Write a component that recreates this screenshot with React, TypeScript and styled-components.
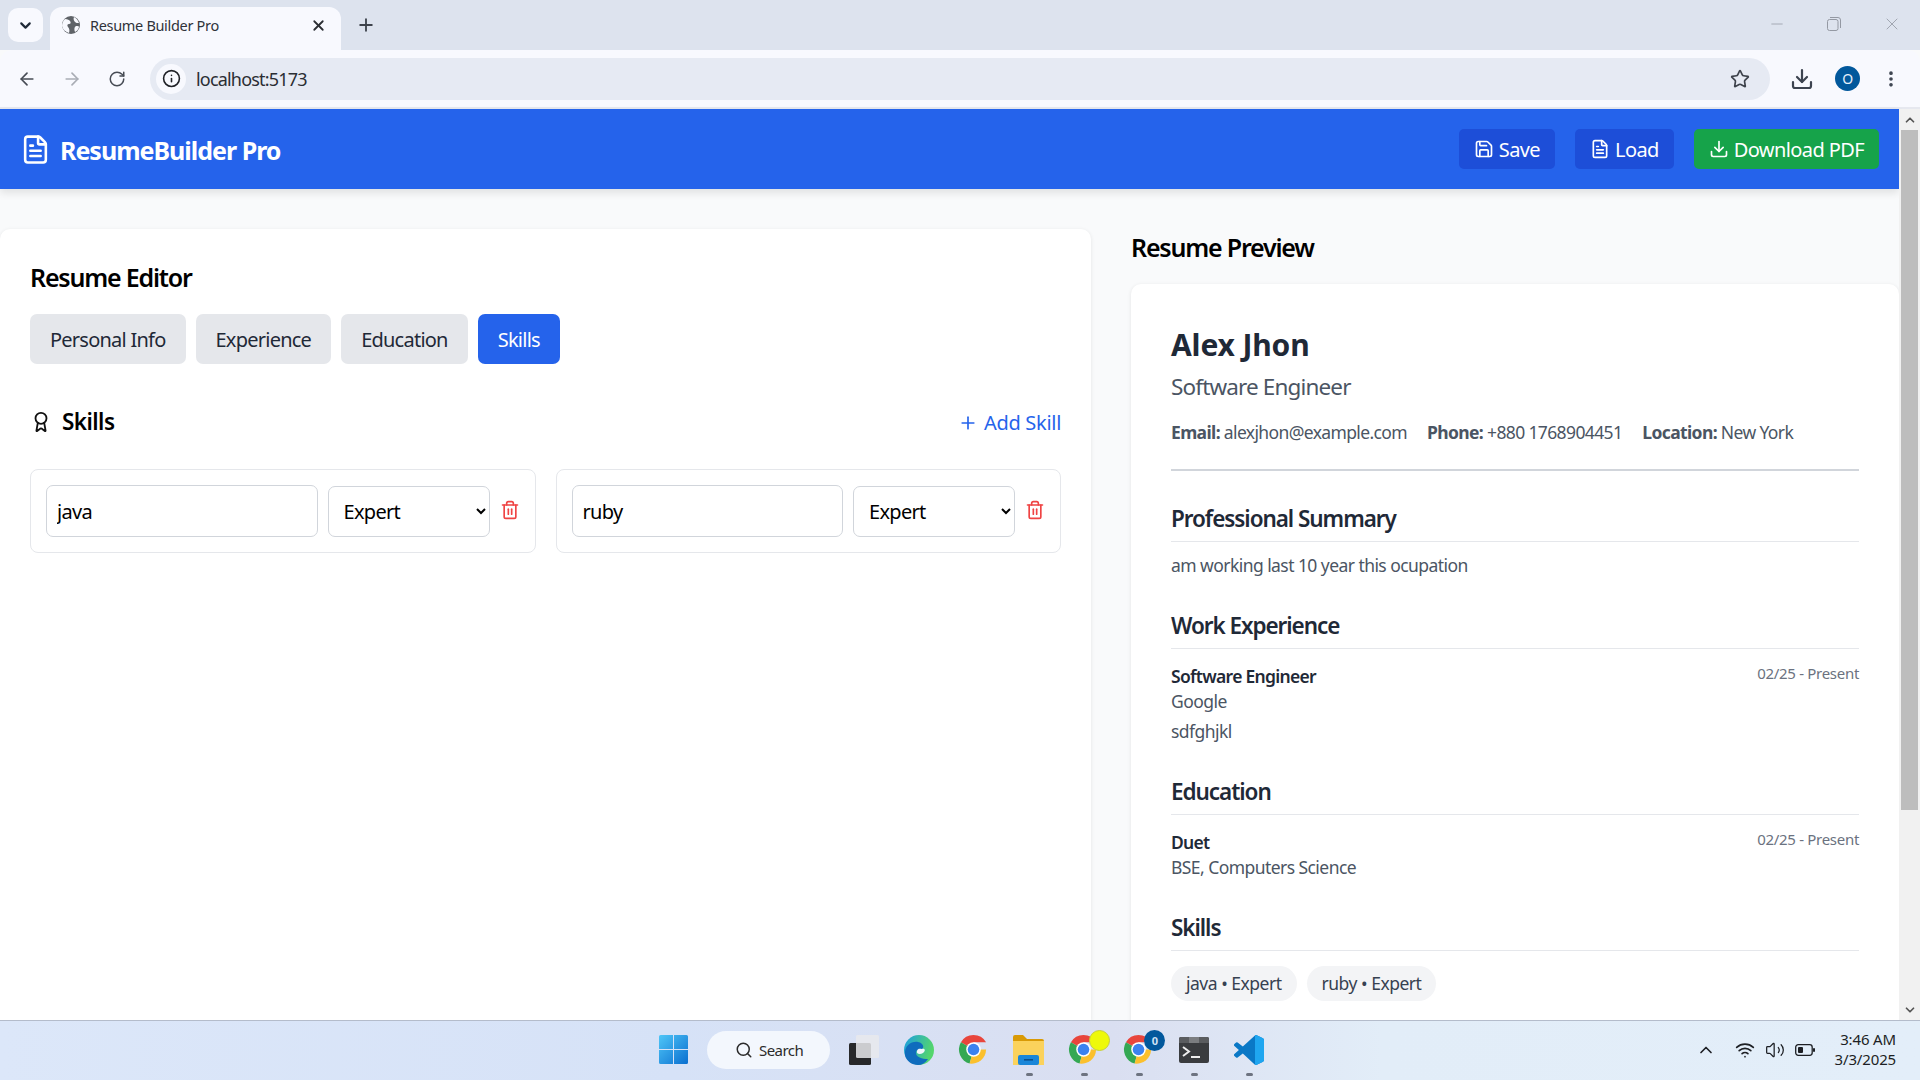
import React from 'react';
import styled, { createGlobalStyle } from 'styled-components';
import {
  ArrowLeft, ArrowRight, Award, ChevronDown, ChevronUp, Download, EllipsisVertical, FileText, Info, Minus, Plus,
  RotateCw, Save, Search, Star, Trash2, Volume2, Wifi, X,
} from 'lucide-react';

const Global = createGlobalStyle`
  html, body { margin: 0; height: 100%; overflow: hidden; background: #f9fafb; }
  * { box-sizing: border-box; }
  body, input, select, button { font-family: "Noto Sans", "Open Sans", sans-serif; letter-spacing: -0.035em; }
`;

const Screen = styled.div`width: 1920px; height: 1080px; display: flex; flex-direction: column; overflow: hidden;`;

const TabStrip = styled.div`height: 50px; background: #dde3ee; display: flex; padding-left: 8px; flex: none;`;
const TabSwitch = styled.div`width: 35px; height: 34px; margin-top: 8px; background: #f8f9fe; border-radius: 10px; display: flex; align-items: center; justify-content: center; color: #1f2937;`;
const BrowserTab = styled.div`
  position: relative; width: 291px; height: 43px; margin: 7px 0 0 7px; background: #f8f9fe; border-radius: 12px 12px 0 0;
  display: flex; align-items: center; padding: 0 14px 7px 11px; font-size: 14.5px; color: #30333a; gap: 9px;
`;
const TabTitle = styled.span`flex: 1; letter-spacing: -0.022em;`;
const NewTab = styled.div`width: 30px; margin: 10px 0 0 10px; height: 30px; display: flex; align-items: center; justify-content: center; color: #3e434c;`;
const WindowControls = styled.div`margin-left: auto; display: flex; align-items: center; gap: 41px; padding: 0 18px 3px 0; color: #9499a3;`;

const Toolbar = styled.div`
  height: 59px; flex: none; background: #f8f9fe; border-bottom: 2px solid #e6e8ef; border-radius: 12px 12px 0 0;
  display: flex; align-items: center; padding: 0 16px 0 17px; color: #474c55;
`;
const NavIcons = styled.div`display: flex; align-items: center; gap: 25px; width: 133px;`;
const ReloadSlot = styled.span`display: flex; margin-left: 1px;`;
const Omnibox = styled.div`width: 1620px; height: 42px; border-radius: 21px; background: #e6eaf3; display: flex; align-items: center; padding: 0 20px 0 6px; font-size: 18px; color: #2b2e33; gap: 10px; letter-spacing: -0.045em;`;
const InfoBadge = styled.div`width: 30px; height: 30px; border-radius: 50%; background: #f8f9fe; display: flex; align-items: center; justify-content: center; color: #1f2126;`;
const StarSlot = styled.div`margin-left: auto; display: flex; color: #3d424b;`;
const ToolActions = styled.div`display: flex; align-items: center; margin-left: 20px; gap: 21px; color: #3d4450;`;
const Avatar = styled.div`width: 25px; height: 25px; border-radius: 50%; background: #02589c; color: #e5f0fa; font-size: 14px; display: flex; align-items: center; justify-content: center;`;

const PageRow = styled.div`flex: 1; min-height: 0; display: flex;`;
const Page = styled.div`width: 1899px; display: flex; flex-direction: column; background: #f9fafb;`;
const Scrollbar = styled.div`width: 21px; background: #f1f1f1; display: flex; flex-direction: column; align-items: flex-end; padding-right: 2px;`;
const ScrollArrow = styled.div<{ $down?: boolean }>`
  height: 21px; width: 17px; display: flex; align-items: center; justify-content: center; color: #555; margin-top: ${p => (p.$down ? 'auto' : '0')};
`;
const ScrollThumb = styled.div`width: 17px; height: 680px; background: #bdbdbd;`;

const Header = styled.header`
  height: 80px; flex: none; background: #2563eb; color: #fff; display: flex; align-items: center; justify-content: space-between;
  padding: 0 20px; box-shadow: 0 4px 8px rgba(0, 0, 0, 0.1);
`;
const Brand = styled.div`display: flex; align-items: center; gap: 9px; font-size: 25px; font-weight: 700; letter-spacing: -0.04em;`;
const BrandName = styled.span`padding-top: 2px;`;
const HeaderActions = styled.div`display: flex; gap: 20px;`;
const HeaderButton = styled.button<{ $green?: boolean }>`
  height: 40px; padding: 0 15px; border: 0; border-radius: 5px; color: #fff; font-size: 20px; letter-spacing: -0.03em;
  background: ${p => (p.$green ? '#16a34a' : '#1d4ed8')}; display: flex; align-items: center; gap: 5px;
`;

const Main = styled.main`flex: 1; min-height: 0; display: flex; gap: 40px; padding-top: 40px;`;
const EditorCard = styled.section`width: 1091px; background: #fff; border-radius: 10px 10px 0 0; padding: 30px; box-shadow: 0 1px 4px rgba(0, 0, 0, 0.09);`;
const PanelTitle = styled.h2`margin: 0 0 19px; padding-top: 1px; font-size: 25px; line-height: 35px; font-weight: 600; color: #000; letter-spacing: -0.048em;`;
const Tabs = styled.div`display: flex; gap: 10px; margin-bottom: 40px;`;
const TabButton = styled.button<{ $active?: boolean }>`
  height: 50px; padding: 0 20px; border: 0; border-radius: 7px; font-size: 20px; letter-spacing: -0.038em;
  background: ${p => (p.$active ? '#2563eb' : '#e5e7eb')}; color: ${p => (p.$active ? '#fff' : '#1f2937')};
`;
const SectionRow = styled.div`display: flex; align-items: center; justify-content: space-between; height: 37px; margin-bottom: 28px;`;
const SectionTitle = styled.h3`margin: 0 0 2px; display: flex; align-items: center; gap: 10px; font-size: 22.5px; font-weight: 600; color: #000;`;
const AddButton = styled.button`border: 0; background: none; padding: 0; color: #2563eb; font-size: 20px; display: flex; align-items: center; gap: 6px; letter-spacing: -0.015em;`;
const SkillGrid = styled.div`display: grid; grid-template-columns: repeat(2, minmax(0, 1fr)); gap: 20px;`;
const SkillCard = styled.div`height: 84px; min-width: 0; border: 1px solid #e5e7eb; border-radius: 8px; padding: 15px; display: flex; gap: 10px;`;
const SkillInput = styled.input`flex: 1; width: 0; min-width: 0; height: 52px; border: 1px solid #d1d5db; border-radius: 7px; padding: 0 10px; font-size: 20px; color: #000; background: #fff;`;
const LevelSelect = styled.select`flex: none; width: 162px; height: 51px; margin-top: 1px; border: 1px solid #d1d5db; border-radius: 7px; padding: 0 10px 0 11px; font-size: 20px; color: #000; background: #fff;`;
const TrashButton = styled.button`flex: none; border: 0; background: none; padding: 0; margin: 0 0 2px; color: #ef4444; display: flex; align-items: center;`;

const PreviewColumn = styled.section`width: 768px; display: flex; flex-direction: column;`;
const ResumeCard = styled.article`flex: 1; background: #fff; border-radius: 10px 10px 0 0; padding: 40px; box-shadow: 0 1px 4px rgba(0, 0, 0, 0.09); color: #1f2937;`;
const Name = styled.h1`margin: 0 0 4px; padding-top: 1px; font-size: 30px; line-height: 40px; font-weight: 700; letter-spacing: -0.005em;`;
const Role = styled.div`font-size: 22.5px; line-height: 35px; color: #4b5563; letter-spacing: -0.038em;`;
const Contact = styled.div`display: flex; gap: 20px; margin-top: 16px; padding-bottom: 24px; border-bottom: 2px solid #d1d5db; font-size: 17.5px; line-height: 25px; color: #4b5563; margin-bottom: 31px; letter-spacing: -0.036em;`;
const ResumeSection = styled.div`margin-bottom: 30px; &:first-of-type { margin-bottom: 29px; }`;
const ResumeHeading = styled.h4`margin: 0 0 12px; padding-bottom: 6px; border-bottom: 1px solid #e5e7eb; font-size: 22.5px; line-height: 33px; font-weight: 600; color: #1f2937; letter-spacing: -0.047em;`;
const BodyText = styled.p<{ $top?: number }>`margin: ${p => p.$top ?? 0}px 0 0; padding-bottom: 2px; font-size: 17.5px; line-height: 23px; color: #4b5563;`;
const ItemRow = styled.div`display: flex; justify-content: space-between; align-items: flex-start; padding-top: 4px;`;
const ItemTitle = styled.div`padding-bottom: 2px; font-size: 17.5px; line-height: 23px; font-weight: 600; color: #1f2937; letter-spacing: -0.04em;`;
const ItemDate = styled.div`font-size: 15px; line-height: 16px; color: #6b7280; letter-spacing: -0.02em;`;
const Chips = styled.div`display: flex; gap: 10px; padding-top: 3px;`;
const Chip = styled.span`height: 35px; padding: 0 15px; border-radius: 18px; background: #f3f4f6; font-size: 17.5px; line-height: 35px; color: #374151; letter-spacing: -0.028em;`;

const Taskbar = styled.footer`
  height: 60px; flex: none; border-top: 1px solid #b4bccb; display: flex; align-items: center; padding: 0 0 2px 659px;
  background: linear-gradient(90deg, #dce7f9 0%, #d6e2f7 35%, #dadff1 58%, #e2edf8 72%, #e3eef9 100%); position: relative;
`;
const SearchPill = styled.div`width: 123px; height: 38px; margin: 0 6px 0 19px; border-radius: 19px; background: #f3f7fd; display: flex; align-items: center; padding-left: 28px; gap: 6px; font-size: 15px; color: #2b2b2b;`;
const AppCell = styled.div`position: relative; width: 55px; height: 58px; display: flex; align-items: center; justify-content: center;`;
const RunDot = styled.span`position: absolute; bottom: 3px; left: 50%; margin-left: -3px; width: 7px; height: 3px; border-radius: 2px; background: #6d7380;`;
const CountBadge = styled.span<{ $yellow?: boolean }>`
  position: absolute; top: 9px; right: 1px; width: 21px; height: 21px; border-radius: 50%; font-size: 11px; font-weight: 700;
  display: flex; align-items: center; justify-content: center; color: #cfe2f5;
  background: ${p => (p.$yellow ? '#eef90a' : '#02589c')}; border: ${p => (p.$yellow ? '1px solid #c6cf3c' : '0')};
`;
const Tray = styled.div`margin-left: auto; display: flex; align-items: center; padding-right: 24px; color: #1d1f24;`;
const TrayIcons = styled.div`display: flex; align-items: center; gap: 10px; margin: 0 20px 0 0;`;
const WifiSlot = styled.span`display: flex; margin-left: 9px;`;
const Clock = styled.div`text-align: right; font-size: 15px; line-height: 20px; color: #1d1f24; letter-spacing: -0.01em; margin-bottom: 2px;`;

const Globe = () => (
  <svg width="20" height="20" viewBox="0 0 20 20"><circle cx="10" cy="10" r="9" fill="#5f6368" />
    <path d="M4 4c3 0 4 1 5 2s1 3-1 3-2 2-1 3 2 3 1 6c-3-1-6-3-7-7 0-3 1-5 3-7zM13 2c2 1 4 3 5 6-2 0-3 0-4-1s-2-3-1-5zM15 11c2 0 3 0 3 1-1 3-2 4-4 5-1-2-1-5 1-6z" fill="#f8f9fe" /></svg>
);
const Restore = () => (
  <svg width="14" height="14" viewBox="0 0 14 14" fill="none" stroke="currentColor" strokeWidth="1"><rect x="0.5" y="2.5" width="10.5" height="11" rx="2" /><path d="M3 .5h8a2.5 2.5 0 0 1 2.5 2.5v8" /></svg>
);
const WinLogo = () => (
  <svg width="29" height="29" viewBox="0 0 29 29"><defs><linearGradient id="win" x1="0" y1="0" x2="1" y2="1"><stop offset="0" stopColor="#4fc6f7" /><stop offset="1" stopColor="#0a6fd0" /></linearGradient></defs>
    <path fill="url(#win)" d="M0 1.5A1.5 1.5 0 0 1 1.5 0H14v14H0zM15 0h12.5A1.5 1.5 0 0 1 29 1.5V14H15zM0 15h14v14H1.5A1.5 1.5 0 0 1 0 27.5zM15 15h14v12.5a1.5 1.5 0 0 1-1.5 1.5H15z" /></svg>
);
const TaskView = () => (
  <svg width="30" height="30" viewBox="0 0 30 30"><rect x="0" y="8" width="22" height="22" rx="1.5" fill="#27282a" /><rect x="7" y="0" width="23" height="23" rx="1.5" fill="#e9e9ec" opacity="0.85" /></svg>
);
const Edge = () => (
  <svg width="30" height="30" viewBox="0 0 30 30"><defs><linearGradient id="eg" x1="0" y1="0" x2="1" y2="0.3"><stop offset="0" stopColor="#1b9de2" /><stop offset="1" stopColor="#54d66c" /></linearGradient></defs>
    <circle cx="15" cy="15" r="15" fill="url(#eg)" /><path d="M1 20C0 10 8 6 14 7c6 1 6 6 4 7-3 1-6 0-6 4 0 4 6 6 12 6-3 4-6 6-10 6C8 30 2 26 1 20z" fill="#0f6cbd" /><path d="M18 14c3-1 4 2 1 4s-7 1-6-2 3-2 5-2z" fill="#f1f6fb" /></svg>
);
const Chrome = () => (
  <svg width="31" height="31" viewBox="0 0 32 32">
    <path d="M16 16 3 8.5A15 15 0 0 1 29 8.5H16z" fill="#e8453c" /><path d="M16 16 3 8.5A15 15 0 0 0 12 30.5z" fill="#34a853" /><path d="M16 16h13A15 15 0 0 1 12 30.5z" fill="#fbc02d" />
    <circle cx="16" cy="16" r="7.5" fill="#fff" /><circle cx="16" cy="16" r="6" fill="#3b82f0" /></svg>
);
const Folder = () => (
  <svg width="31" height="30" viewBox="0 0 31 30"><path d="M0 2a2 2 0 0 1 2-2h8l4 4h15a2 2 0 0 1 2 2v4H0z" fill="#d99a06" /><path d="M0 6h31v24H0z" fill="#fbd25c" /><rect x="5" y="20" width="21" height="10" rx="2" fill="#1a86d8" /><rect x="11" y="24" width="9" height="1.6" fill="#0b4f8c" /></svg>
);
const Terminal = () => (
  <svg width="30" height="26" viewBox="0 0 30 26"><rect width="30" height="26" rx="2" fill="#3a3c3f" /><path d="M2 0h26a2 2 0 0 1 2 2v4H0V2a2 2 0 0 1 2-2z" fill="#5a5c5f" /><rect x="10" width="10" height="6" fill="#7b7d80" /><path d="M4 10l6 4.5L4 19" stroke="#eee" strokeWidth="2" fill="none" /><rect x="12" y="19" width="9" height="2" fill="#eee" /></svg>
);
const VSCODE_PATH = 'M71 99.3a6.2 6.2 0 0 0 5-.2l20.6-9.9a6.25 6.25 0 0 0 3.4-5.6V16.4a6.25 6.25 0 0 0-3.5-5.6L75.9.9a6.2 6.2 0 0 0-7.1 1.2L29.4 38.1 12.2 25.1a4.2 4.2 0 0 0-5.3.2l-5.5 5a4.2 4.2 0 0 0 0 6.2L16.3 50 1.4 63.6a4.2 4.2 0 0 0 0 6.2l5.5 5a4.2 4.2 0 0 0 5.3.2l17.2-13 39.4 36a6.2 6.2 0 0 0 2.6 1.5zM75 27.3 45.1 50 75 72.7z';
const VSCode = () => (
  <svg width="30" height="30" viewBox="0 0 100 100"><defs><clipPath id="vsr"><rect x="70" y="0" width="30" height="100" /></clipPath></defs>
    <path d={VSCODE_PATH} fill="#0a78c6" /><path d={VSCODE_PATH} fill="#1fa6f0" clipPath="url(#vsr)" /></svg>
);

const skills = ['java', 'ruby'];

const App = () => (
  <Screen>
    <Global />
    <TabStrip>
      <TabSwitch><ChevronDown size={17} strokeWidth={3} /></TabSwitch>
      <BrowserTab>
        <Globe />
        <TabTitle>Resume Builder Pro</TabTitle>
        <X size={17} strokeWidth={2.5} color="#2b2e33" />
      </BrowserTab>
      <NewTab><Plus size={20} strokeWidth={2.2} /></NewTab>
      <WindowControls>
        <Minus size={18} strokeWidth={1} />
        <Restore />
        <X size={20} strokeWidth={1} />
      </WindowControls>
    </TabStrip>
    <Toolbar>
      <NavIcons>
        <ArrowLeft size={20} />
        <ArrowRight size={20} color="#a9adb5" />
        <ReloadSlot><RotateCw size={18} /></ReloadSlot>
      </NavIcons>
      <Omnibox>
        <InfoBadge><Info size={19} /></InfoBadge>
        localhost:5173
        <StarSlot><Star size={20} /></StarSlot>
      </Omnibox>
      <ToolActions>
        <Download size={24} strokeWidth={2.2} />
        <Avatar>O</Avatar>
        <EllipsisVertical size={20} strokeWidth={2.4} />
      </ToolActions>
    </Toolbar>
    <PageRow>
      <Page>
        <Header>
          <Brand><FileText size={31} strokeWidth={2} /><BrandName>ResumeBuilder Pro</BrandName></Brand>
          <HeaderActions>
            <HeaderButton><Save size={20} />Save</HeaderButton>
            <HeaderButton><FileText size={20} />Load</HeaderButton>
            <HeaderButton $green><Download size={20} />Download PDF</HeaderButton>
          </HeaderActions>
        </Header>
        <Main>
          <EditorCard>
            <PanelTitle>Resume Editor</PanelTitle>
            <Tabs>
              <TabButton>Personal Info</TabButton>
              <TabButton>Experience</TabButton>
              <TabButton>Education</TabButton>
              <TabButton $active>Skills</TabButton>
            </Tabs>
            <SectionRow>
              <SectionTitle><Award size={22} color="#111" />Skills</SectionTitle>
              <AddButton><Plus size={20} />Add Skill</AddButton>
            </SectionRow>
            <SkillGrid>
              {skills.map(s => (
                <SkillCard key={s}>
                  <SkillInput defaultValue={s} />
                  <LevelSelect defaultValue="Expert">
                    <option>Beginner</option>
                    <option>Intermediate</option>
                    <option>Expert</option>
                  </LevelSelect>
                  <TrashButton aria-label="Remove"><Trash2 size={20} /></TrashButton>
                </SkillCard>
              ))}
            </SkillGrid>
          </EditorCard>
          <PreviewColumn>
            <PanelTitle>Resume Preview</PanelTitle>
            <ResumeCard>
              <Name>Alex Jhon</Name>
              <Role>Software Engineer</Role>
              <Contact>
                <span><b>Email:</b> alexjhon@example.com</span>
                <span><b>Phone:</b> +880 1768904451</span>
                <span><b>Location:</b> New York</span>
              </Contact>
              <ResumeSection>
                <ResumeHeading>Professional Summary</ResumeHeading>
                <BodyText>am working last 10 year this ocupation</BodyText>
              </ResumeSection>
              <ResumeSection>
                <ResumeHeading>Work Experience</ResumeHeading>
                <ItemRow>
                  <ItemTitle>Software Engineer</ItemTitle>
                  <ItemDate>02/25 - Present</ItemDate>
                </ItemRow>
                <BodyText>Google</BodyText>
                <BodyText $top={5}>sdfghjkl</BodyText>
              </ResumeSection>
              <ResumeSection>
                <ResumeHeading>Education</ResumeHeading>
                <ItemRow>
                  <ItemTitle>Duet</ItemTitle>
                  <ItemDate>02/25 - Present</ItemDate>
                </ItemRow>
                <BodyText>BSE, Computers Science</BodyText>
              </ResumeSection>
              <ResumeSection>
                <ResumeHeading>Skills</ResumeHeading>
                <Chips>
                  <Chip>java • Expert</Chip>
                  <Chip>ruby • Expert</Chip>
                </Chips>
              </ResumeSection>
            </ResumeCard>
          </PreviewColumn>
        </Main>
      </Page>
      <Scrollbar>
        <ScrollArrow><ChevronUp size={14} strokeWidth={3} /></ScrollArrow>
        <ScrollThumb />
        <ScrollArrow $down><ChevronDown size={14} strokeWidth={3} /></ScrollArrow>
      </Scrollbar>
    </PageRow>
    <Taskbar>
      <WinLogo />
      <SearchPill><Search size={18} />Search</SearchPill>
      <AppCell><TaskView /></AppCell>
      <AppCell><Edge /></AppCell>
      <AppCell><Chrome /></AppCell>
      <AppCell><Folder /><RunDot /></AppCell>
      <AppCell><Chrome /><CountBadge $yellow /><RunDot /></AppCell>
      <AppCell><Chrome /><CountBadge>0</CountBadge><RunDot /></AppCell>
      <AppCell><Terminal /><RunDot /></AppCell>
      <AppCell><VSCode /><RunDot /></AppCell>
      <Tray>
        <TrayIcons>
          <ChevronUp size={20} />
          <WifiSlot><Wifi size={20} /></WifiSlot>
          <Volume2 size={20} strokeWidth={1.5} />
          <svg width="20" height="12" viewBox="0 0 20 12"><rect x="0.7" y="0.7" width="16.5" height="10.6" rx="2.5" fill="none" stroke="currentColor" strokeWidth="1.3" /><rect x="3" y="3" width="5" height="6" rx="1" fill="currentColor" /><rect x="18" y="4" width="2" height="4" rx="1" fill="currentColor" /></svg>
        </TrayIcons>
        <Clock>3:46 AM<br />3/3/2025</Clock>
      </Tray>
    </Taskbar>
  </Screen>
);

export default App;
